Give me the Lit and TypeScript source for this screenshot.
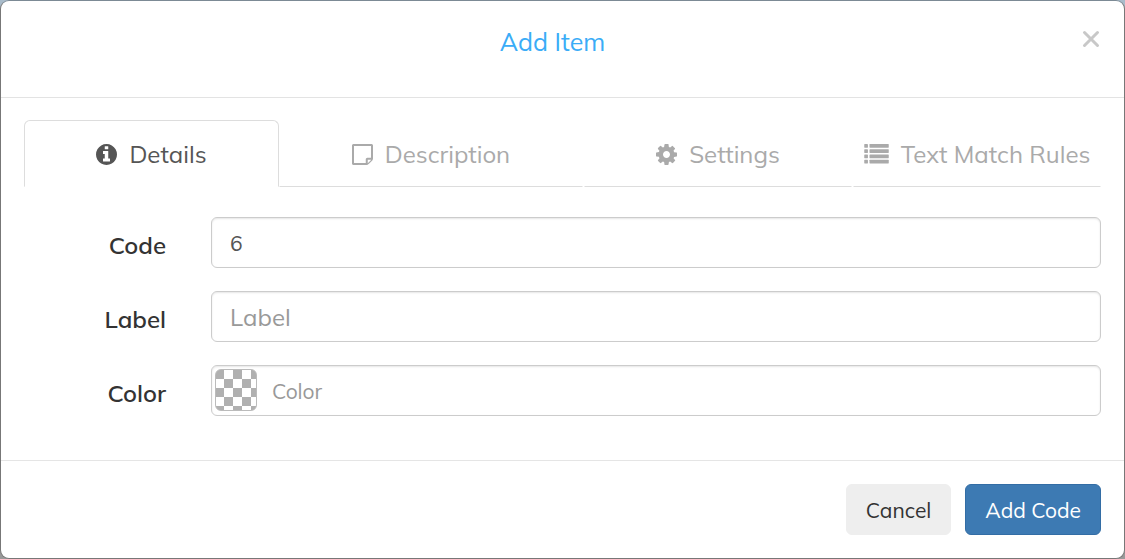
import { LitElement, html, css, svg } from "lit";
import { customElement, state } from "lit/decorators.js";

const infoIcon = svg`<svg class="icon" viewBox="128 128 1536 1536" aria-hidden="true"><path d="M1152 1376v-160q0-14-9-23t-23-9h-96v-512q0-14-9-23t-23-9h-320q-14 0-23 9t-9 23v160q0 14 9 23t23 9h96v320h-96q-14 0-23 9t-9 23v160q0 14 9 23t23 9h448q14 0 23-9t9-23zm-128-896v-160q0-14-9-23t-23-9h-192q-14 0-23 9t-9 23v160q0 14 9 23t23 9h192q14 0 23-9t9-23zm640 416q0 209-103 385.5t-279.5 279.5-385.5 103-385.5-103-279.5-279.5-103-385.5 103-385.5 279.5-279.5 385.5-103 385.5 103 279.5 279.5 103 385.5z"/></svg>`;

const noteIcon = svg`<svg class="icon" viewBox="0 0 1536 1536" aria-hidden="true"><path fill-rule="evenodd" d="M96 0H1440Q1480 0 1508 28T1536 96V1056Q1536 1096 1516 1144T1468 1220L1220 1468Q1192 1496 1144 1516T1056 1536H96Q56 1536 28 1508T0 1440V96Q0 56 28 28T96 0ZM146 146V1390H1006V1120Q1006 1072 1039 1039T1120 1006H1390V146ZM1152 1152V1401Q1177 1390 1189 1378L1378 1189Q1389 1178 1400 1152Z"/></svg>`;

const gearIcon = svg`<svg class="icon" viewBox="128 128 1536 1536" aria-hidden="true"><path d="M1152 896q0-106-75-181t-181-75-181 75-75 181 75 181 181 75 181-75 75-181zm512-109v222q0 12-8 23t-20 13l-185 28q-19 54-39 91 35 50 107 138 10 12 10 25t-9 23q-27 37-99 108t-94 71q-12 0-26-9l-138-108q-44 23-91 38-16 136-29 186-7 28-36 28h-222q-14 0-24.5-8.5t-11.5-21.5l-28-184q-49-16-90-37l-141 107q-10 9-25 9-14 0-25-11-126-114-165-168-7-10-7-23 0-12 8-23 15-21 51-66.5t54-70.5q-27-50-41-99l-183-27q-13-2-21-12.5t-8-23.5v-222q0-12 8-23t19-13l186-28q14-46 39-92-40-57-107-138-10-12-10-24 0-10 9-23 26-36 98.5-107.5t94.5-71.5q13 0 26 10l138 107q44-23 91-38 16-136 29-186 7-28 36-28h222q14 0 24.5 8.5t11.5 21.5l28 184q49 16 90 37l142-107q9-9 24-9 13 0 25 10 129 119 165 170 7 8 7 22 0 12-8 23-15 21-51 66.5t-54 70.5q26 50 41 98l183 28q13 2 21 12.5t8 23.5z"/></svg>`;

const listIcon = svg`<svg class="icon wide" viewBox="0 0 1792 1536" aria-hidden="true">${[0, 384, 768, 1152].map(
  (y) => svg`<rect x="0" y=${y} width="270" height="270" rx="32"/><rect x="384" y=${y} width="1408" height="270" rx="32"/>`
)}</svg>`;

const TABS = [
  { id: "details", label: "Details", icon: infoIcon },
  { id: "description", label: "Description", icon: noteIcon },
  { id: "settings", label: "Settings", icon: gearIcon },
  { id: "rules", label: "Text Match Rules", icon: listIcon },
];

@customElement("app-root")
export class AppRoot extends LitElement {
  @state() private active = "details";

  static styles = css`
    :host {
      display: block;
      min-height: 100vh;
      background: linear-gradient(#a9bccb, #8d9296 30%, #999);
      font-family: Mulish, Muli, Lato, "Open Sans", sans-serif;
      font-size: 24px;
      line-height: 34px;
      color: #333;
    }
    * {
      box-sizing: border-box;
    }
    button,
    input {
      font: inherit;
      margin: 0;
    }
    button {
      cursor: pointer;
    }
    .dialog {
      display: flex;
      flex-direction: column;
      min-height: 100vh;
      border: 1px solid #777;
      border-top-color: #7c8a95;
      border-radius: 9px;
      background: #fff;
    }
    .header {
      display: flex;
      align-items: flex-start;
      padding: 24px 23px 38px;
      border-bottom: 1px solid #e3e3e3;
    }
    .title {
      flex: 1;
      margin: 0;
      text-align: center;
      font-size: 25px;
      font-weight: 400;
      color: #3aacf7;
    }
    .close {
      display: flex;
      justify-content: center;
      width: 20px;
      padding: 5px 0;
      border: 0;
      background: none;
    }
    .cross {
      width: 18px;
      height: 18px;
      flex: none;
      stroke: #c8c8c8;
      stroke-width: 3;
      stroke-linecap: round;
    }
    .body {
      flex: 1;
      padding: 22px 23px 44px;
    }
    .tabs {
      display: grid;
      grid-template-columns: 255fr 305fr 269fr 248fr;
    }
    .tab {
      display: flex;
      align-items: center;
      justify-content: center;
      gap: 12px;
      height: 67px;
      margin-right: 1px;
      padding: 0;
      border: 1px solid transparent;
      border-bottom-color: #ddd;
      border-radius: 6px 6px 0 0;
      background: #fff;
      color: #aaa;
      white-space: nowrap;
    }
    .tab:last-child,
    .tab.active {
      margin-right: 0;
    }
    .tab.active {
      border-color: #ddd #ddd transparent;
      color: #555;
    }
    .icon {
      width: 21px;
      height: 21px;
      flex: none;
      margin-top: 2px;
      fill: currentColor;
    }
    .icon.wide {
      width: 25px;
    }
    .fields {
      display: grid;
      grid-template-columns: 142px 1fr;
      column-gap: 45px;
      row-gap: 23px;
      padding-top: 30px;
    }
    .label {
      padding-top: 11px;
      text-align: right;
      font-weight: 600;
    }
    .control {
      position: relative;
    }
    .input {
      display: block;
      width: 100%;
      height: 51px;
      padding: 0 18px;
      border: 1px solid #ccc;
      border-radius: 6px;
      background: #fff;
      box-shadow: inset 0 1px 2px rgba(0, 0, 0, 0.1);
      color: #555;
      outline: 0;
    }
    .input.small {
      font-size: 21px;
    }
    .input.with-swatch {
      padding-left: 60px;
    }
    .input::placeholder {
      color: #999;
      opacity: 1;
    }
    .swatch {
      position: absolute;
      top: 4px;
      left: 4px;
      width: 42px;
      height: 42px;
      padding: 0;
      border: 1px solid #bbb;
      border-radius: 6px;
      background: conic-gradient(#fff 25%, #b0b0b0 0 50%, #fff 0 75%, #b0b0b0 0) -1px 0 / 18px 18px;
    }
    .footer {
      display: flex;
      justify-content: flex-end;
      gap: 14px;
      padding: 23px;
      border-top: 1px solid #e5e5e5;
    }
    .button {
      height: 51px;
      padding: 0 19px;
      border: 1px solid #eee;
      border-radius: 6px;
      background: #eee;
      color: #333;
      font-size: 21px;
    }
    .button.primary {
      border-color: #336da5;
      background: #3d7ab3;
      color: #fff;
    }
  `;

  render() {
    return html`
      <form class="dialog" role="dialog" aria-labelledby="title" @submit=${(e: Event) => e.preventDefault()}>
        <header class="header">
          <h1 class="title" id="title">Add Item</h1>
          <button class="close" type="button" aria-label="Close">
            <svg class="cross" viewBox="0 0 18 18" aria-hidden="true"><path d="M2.5 2.5L15.5 15.5M15.5 2.5L2.5 15.5" /></svg>
          </button>
        </header>
        <main class="body">
          <div class="tabs" role="tablist">
            ${TABS.map(
              (t) => html`<button
                class="tab ${t.id === this.active ? "active" : ""}"
                type="button"
                role="tab"
                aria-selected=${t.id === this.active ? "true" : "false"}
                @click=${() => (this.active = t.id)}
              >${t.icon}<span>${t.label}</span></button>`
            )}
          </div>
          <div class="fields">
            <label class="label" for="code">Code</label>
            <div class="control"><input class="input small" id="code" type="text" value="6" /></div>
            <label class="label" for="label">Label</label>
            <div class="control"><input class="input" id="label" type="text" placeholder="Label" /></div>
            <label class="label" for="color">Color</label>
            <div class="control">
              <input class="input small with-swatch" id="color" type="text" placeholder="Color" />
              <button class="swatch" type="button" aria-label="Pick a color"></button>
            </div>
          </div>
        </main>
        <footer class="footer">
          <button class="button" type="button">Cancel</button>
          <button class="button primary" type="submit">Add Code</button>
        </footer>
      </form>
    `;
  }
}
